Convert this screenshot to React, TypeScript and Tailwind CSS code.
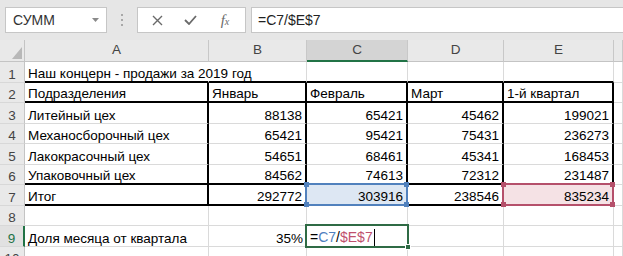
import clsx from 'clsx'

type CellDef = {
  text?: string
  right?: boolean
  thickR?: boolean
  thickB?: boolean
  noR?: boolean
  overflow?: boolean
  sel?: 'blue' | 'red' | 'active'
}

const COLS = ['A', 'B', 'C', 'D', 'E', '']

const ROW_H = [
  'h-[21px]', 'h-[20px]', 'h-[21px]', 'h-[20px]', 'h-[21px]',
  'h-[20px]', 'h-[21px]', 'h-[20px]', 'h-[21px]', 'h-[20px]',
]

const body = (a: string, nums: string[], opts: Partial<CellDef> = {}): CellDef[] => [
  { text: a, thickR: true, ...opts },
  ...nums.map(n => ({ text: n, right: true, thickR: true, ...opts })),
  {},
]

const rows: CellDef[][] = [
  [
    { text: 'Наш концерн - продажи за 2019 год', noR: true, overflow: true, thickB: true },
    { thickB: true }, { thickB: true }, { thickB: true }, { thickB: true }, {},
  ],
  [
    { text: 'Подразделения', thickR: true, thickB: true },
    { text: 'Январь', thickR: true, thickB: true },
    { text: 'Февраль', thickR: true, thickB: true },
    { text: 'Март', thickR: true, thickB: true },
    { text: '1-й квартал', thickR: true, thickB: true },
    {},
  ],
  body('Литейный цех', ['88138', '65421', '45462', '199021']),
  body('Механосборочный цех', ['65421', '95421', '75431', '236273']),
  body('Лакокрасочный цех', ['54651', '68461', '45341', '168453']),
  body('Упаковочный цех', ['84562', '74613', '72312', '231487'], { thickB: true }),
  [
    { text: 'Итог', thickR: true, thickB: true },
    { text: '292772', right: true, thickR: true, thickB: true },
    { text: '303916', right: true, thickR: true, thickB: true, sel: 'blue' },
    { text: '238546', right: true, thickR: true, thickB: true },
    { text: '835234', right: true, thickR: true, thickB: true, sel: 'red' },
    {},
  ],
  [{}, {}, {}, {}, {}, {}],
  [
    { text: 'Доля месяца от квартала' },
    { text: '35%', right: true },
    { sel: 'active' },
    {}, {}, {},
  ],
  [{}, {}, {}, {}, {}, {}],
]

function Handles({ color }: { color: string }) {
  return (
    <>
      <div className={clsx('absolute -left-[3px] -top-[3px] size-[5px]', color)} />
      <div className={clsx('absolute -right-[3px] -top-[3px] size-[5px]', color)} />
      <div className={clsx('absolute -left-[3px] -bottom-[3px] size-[5px]', color)} />
      <div className={clsx('absolute -right-[3px] -bottom-[3px] size-[5px]', color)} />
    </>
  )
}

function Cell({ cell, rowH }: { cell: CellDef; rowH: string }) {
  return (
    <div
      className={clsx(
        'relative flex items-end leading-[15px] whitespace-nowrap',
        rowH,
        cell.right ? 'justify-end pr-[3px]' : 'pl-[3px]',
        cell.overflow ? 'overflow-visible z-[1]' : 'overflow-hidden',
        cell.thickR ? 'border-r-2 border-r-black' : cell.noR ? 'border-r border-r-transparent' : 'border-r border-r-[#dadada]',
        cell.thickB ? 'border-b-2 border-b-black' : 'border-b border-b-[#dadada]',
        cell.sel === 'blue' && 'bg-[#dde7f3] overflow-visible',
        cell.sel === 'red' && 'bg-[#f5e2e5] overflow-visible',
        cell.sel === 'active' && 'overflow-visible',
      )}
    >
      {cell.text}
      {cell.sel === 'blue' && (
        <div className="absolute -inset-[2px] z-10 border-2 border-[#5181bd]">
          <Handles color="bg-[#5181bd]" />
        </div>
      )}
      {cell.sel === 'red' && (
        <div className="absolute -inset-[2px] z-10 border-2 border-[#b5506b]">
          <Handles color="bg-[#b5506b]" />
        </div>
      )}
      {cell.sel === 'active' && (
        <div className="absolute -inset-[2px] z-10 flex items-end border-2 border-[#2f6b45] pb-[1px] pl-[3px] text-[14px] leading-[15px]">
          <span>=</span>
          <span className="text-[#4f7fbe]">C7</span>
          <span>/</span>
          <span className="text-[#c0506e]">$E$7</span>
          <span className="ml-[1px] mb-[-1px] h-[17px] w-px bg-black" />
          <div className="absolute -right-[4px] -bottom-[4px] size-[6px] border border-white bg-[#2f6b45]" />
        </div>
      )}
    </div>
  )
}

export default function App() {
  return (
    <div className="w-[623px] h-[256px] overflow-hidden bg-white font-['Liberation_Sans',sans-serif] text-[13.5px] text-black">
      {/* Formula bar */}
      <div className="flex h-[40px] items-start bg-[#e6e6e6] pt-[7px] pl-[5px]">
        <div className="flex h-[26px] w-[102px] items-center justify-between border border-[#c6c6c6] bg-white pl-[7px] pr-[7px] text-[14px] text-[#333]">
          <span>СУММ</span>
          <svg width="7" height="4" viewBox="0 0 7 4">
            <path d="M0 0h7L3.5 4z" fill="#8a8a8a" />
          </svg>
        </div>
        <div className="flex h-[26px] w-[30px] items-center justify-center">
          <svg width="2" height="12" viewBox="0 0 2 12">
            <rect x="0" y="0" width="2" height="2" fill="#a8a8a8" />
            <rect x="0" y="5" width="2" height="2" fill="#a8a8a8" />
            <rect x="0" y="10" width="2" height="2" fill="#a8a8a8" />
          </svg>
        </div>
        <div className="flex h-[26px] w-[109px] items-center border border-[#c6c6c6] bg-white">
          <div className="flex w-[38px] justify-center">
            <svg width="11" height="11" viewBox="0 0 11 11">
              <path d="M1 1l9 9M10 1l-9 9" stroke="#6a6a6a" strokeWidth="1.4" />
            </svg>
          </div>
          <div className="flex w-[29px] justify-center">
            <svg width="13" height="10" viewBox="0 0 13 10">
              <path d="M1 5l4 4 7-8" stroke="#6a6a6a" strokeWidth="1.8" fill="none" />
            </svg>
          </div>
          <div className="flex w-[40px] justify-center font-['Liberation_Serif',serif] text-[15px] italic text-[#6a6a6a]">
            f<span className="mt-[5px] text-[10px]">x</span>
          </div>
        </div>
        <div className="ml-[5px] flex h-[26px] flex-1 items-center border border-r-0 border-[#c6c6c6] bg-white pl-[6px] text-[14px] text-[#222]">
          =C7/$E$7
        </div>
      </div>

      {/* Sheet */}
      <div className="grid grid-cols-[25px_184px_98px_101px_96px_110px_1fr]">
        {/* column headers */}
        <div className="relative h-[22px] border-r border-b border-[#c4c4c4] bg-[#e9e9e9]">
          <svg className="absolute right-[2px] bottom-[2px]" width="10" height="12" viewBox="0 0 10 12">
            <path d="M10 0v12H0z" fill="#b8b8b8" />
          </svg>
        </div>
        {COLS.map(c => (
          <div
            key={c || 'F'}
            className={clsx(
              'flex h-[22px] items-center justify-center border-r border-[#c8c8c8] text-[#444]',
              c === 'C' ? 'border-b-2 border-b-[#217346] bg-[#d4d4d4]' : 'border-b border-b-[#c4c4c4] bg-[#e9e9e9]',
            )}
          >
            {c}
          </div>
        ))}

        {rows.map((r, i) => (
          <div key={i} className="contents">
            <div
              className={clsx(
                'flex items-end justify-center leading-[15px] border-b border-b-[#d8d8d8]',
                ROW_H[i],
                i === 8 ? 'border-r-2 border-r-[#217346] bg-[#e1e1e1] text-[#217346]' : 'border-r border-r-[#c4c4c4] bg-[#e9e9e9] text-[#444]',
              )}
            >
              {i + 1}
            </div>
            {r.map((cell, j) => (
              <Cell key={j} cell={cell} rowH={ROW_H[i]} />
            ))}
          </div>
        ))}
      </div>
    </div>
  )
}
